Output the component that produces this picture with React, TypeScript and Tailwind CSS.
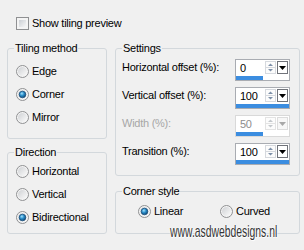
import React from 'react';

const font = "font-['Liberation_Sans',Arial,sans-serif]";

function Radio({ checked }: { checked?: boolean }) {
  return (
    <svg width="13" height="13" viewBox="0 0 13 13" className="shrink-0">
      <defs>
        <linearGradient id="rf" x1="0" y1="0" x2="1" y2="1">
          <stop offset="0" stopColor="#cfd1d4" />
          <stop offset="1" stopColor="#fbfbfb" />
        </linearGradient>
        <radialGradient id="rd" cx="0.4" cy="0.35" r="0.7">
          <stop offset="0" stopColor="#a6e2fb" />
          <stop offset="0.45" stopColor="#2b8fcb" />
          <stop offset="1" stopColor="#0b3f6b" />
        </radialGradient>
      </defs>
      <circle cx="6.5" cy="6.5" r="6" fill="#f4f4f4" stroke="#8f9092" strokeWidth="1" />
      <circle cx="6.5" cy="6.5" r="4.5" fill="url(#rf)" />
      {checked && <circle cx="6.5" cy="6.5" r="3.3" fill="url(#rd)" stroke="#1b4f7c" strokeWidth="0.8" />}
    </svg>
  );
}

function RadioRow({ label, checked, className = '' }: { label: string; checked?: boolean; className?: string }) {
  return (
    <div className={`flex items-center gap-[3px] h-[23px] ${className}`}>
      <Radio checked={checked} />
      <span className="leading-[13px]">{label}</span>
    </div>
  );
}

function Spin({ value, fill, disabled }: { value: string; fill: number; disabled?: boolean }) {
  const arrow = disabled ? '#c4c8cc' : '#7d8fa8';
  return (
    <div className={`w-[55px] h-[22px] border bg-white flex flex-col shrink-0 ${disabled ? 'border-[#d9d9d9]' : 'border-[#a9acb2]'}`}>
      <div className="flex h-[16px] items-start">
        <span className={`flex-1 pl-[4px] leading-[16px] ${disabled ? 'text-[#8d8d8d]' : 'text-black'}`}>{value}</span>
        <svg width="11" height="13" viewBox="0 0 11 13" className="mt-[1px]">
          <rect x="0.5" y="0.5" width="10" height="12" fill="#fcfcfc" stroke={disabled ? '#e3e3e3' : '#d6d9de'} />
          <line x1="1" y1="6.5" x2="10" y2="6.5" stroke={disabled ? '#e3e3e3' : '#d6d9de'} />
          <path d="M3 5 L5.5 2.5 L8 5 Z" fill={arrow} />
          <path d="M3 8 L5.5 10.5 L8 8 Z" fill={arrow} />
        </svg>
        <div className={`w-[11px] h-[13px] mt-[1px] ml-[1px] mr-[1px] border flex items-center justify-center ${disabled ? 'border-[#dcdcdc] bg-[#f7f7f7]' : 'border-[#70737a] bg-white'}`}>
          <svg width="7" height="4" viewBox="0 0 7 4">
            <path d="M0 0 L7 0 L3.5 4 Z" fill={disabled ? '#a8a8a8' : '#000'} />
          </svg>
        </div>
      </div>
      <div className="h-[4px]">
        <div className="h-full bg-[#3b8de0]" style={{ width: `${fill}%` }} />
      </div>
    </div>
  );
}

function SettingRow({ label, value, fill, disabled }: { label: string; value: string; fill: number; disabled?: boolean }) {
  return (
    <div className="flex items-start justify-between h-[22px]">
      <span className={`leading-[16px] ${disabled ? 'text-[#a7a7a7]' : ''}`}>{label}</span>
      <Spin value={value} fill={fill} disabled={disabled} />
    </div>
  );
}

function Group({ title, className = '', children }: { title: string; className?: string; children: React.ReactNode }) {
  return (
    <fieldset className={`border border-[#d3d8dc] rounded-[3px] ${className}`}>
      <legend className="ml-[6px] px-[1px] leading-[13px]">{title}</legend>
      {children}
    </fieldset>
  );
}

export default function App() {
  return (
    <div className={`relative w-[304px] h-[250px] overflow-hidden bg-[#f0f0f0] text-[11px] tracking-[-0.25px] text-black ${font}`}>
      <div className="pt-[17px] pl-[16px] flex items-center gap-[3px]">
        <div className="w-[13px] h-[13px] border border-[#8f9092] bg-[#f4f4f4] p-[2px]">
          <div className="w-full h-full bg-gradient-to-br from-[#cbcfd4] to-[#f7f7f7]" />
        </div>
        <span className="leading-[13px]">Show tiling preview</span>
      </div>

      <div className="flex pl-[7px] mt-[12px] gap-[8px]">
        <div className="flex flex-col w-[100px] gap-[7px]">
          <Group title="Tiling method" className="h-[97px]">
            <div className="pl-[8px] mt-[5px]">
              <RadioRow label="Edge" />
              <RadioRow label="Corner" checked />
              <RadioRow label="Mirror" />
            </div>
          </Group>
          <Group title="Direction" className="h-[88px]">
            <div className="pl-[8px] mt-[1px]">
              <RadioRow label="Horizontal" />
              <RadioRow label="Vertical" />
              <RadioRow label="Bidirectional" checked />
            </div>
          </Group>
        </div>

        <div className="flex flex-col w-[185px] gap-[9px]">
          <Group title="Settings" className="h-[134px]">
            <div className="pl-[6px] pr-[9px] mt-[4px] flex flex-col gap-[6px]">
              <SettingRow label="Horizontal offset (%):" value="0" fill={51} />
              <SettingRow label="Vertical offset (%):" value="100" fill={100} />
              <SettingRow label="Width (%):" value="50" fill={51} disabled />
              <SettingRow label="Transition (%):" value="100" fill={100} />
            </div>
          </Group>
          <Group title="Corner style" className="h-[49px]">
            <div className="flex pl-[22px] mt-[2px]">
              <RadioRow label="Linear" checked className="w-[82px]" />
              <RadioRow label="Curved" />
            </div>
          </Group>
        </div>
      </div>

      <div className="absolute left-[170px] top-[222px] origin-left scale-x-[0.61] whitespace-nowrap tracking-normal text-[17px] leading-[20px] text-[#353535] [text-shadow:0_0_2px_#fff,0_0_2px_#fff,1px_1px_1px_#fff]">
        www.asdwebdesigns.nl
      </div>
    </div>
  );
}
